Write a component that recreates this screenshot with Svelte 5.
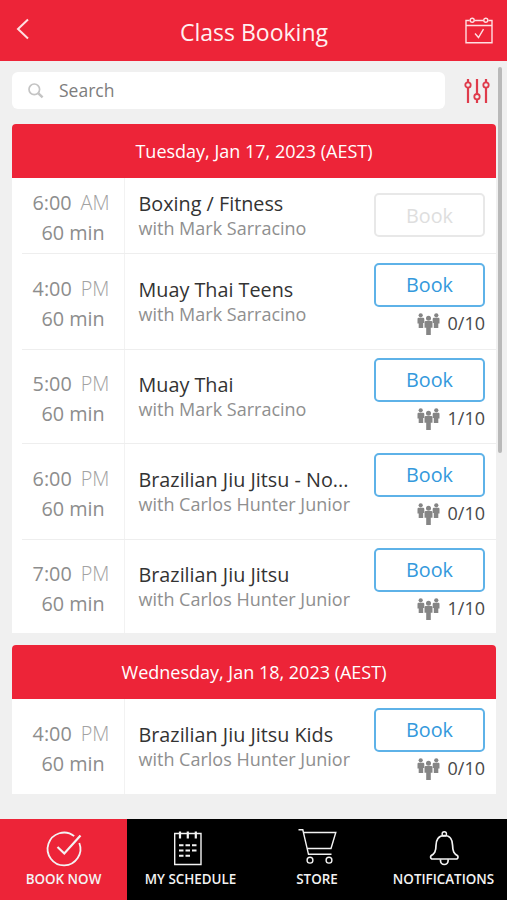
<script lang="ts">
  interface ClassItem {
    time: string;
    period: string;
    title: string;
    coach: string;
    spots: string | null;
    height: number;
  }

  interface Day {
    label: string;
    classes: ClassItem[];
  }

  const days: Day[] = [
    {
      label: 'Tuesday, Jan 17, 2023 (AEST)',
      classes: [
        { time: '6:00', period: 'AM', title: 'Boxing / Fitness', coach: 'Mark Sarracino', spots: null, height: 75 },
        { time: '4:00', period: 'PM', title: 'Muay Thai Teens', coach: 'Mark Sarracino', spots: '0/10', height: 96 },
        { time: '5:00', period: 'PM', title: 'Muay Thai', coach: 'Mark Sarracino', spots: '1/10', height: 94 },
        { time: '6:00', period: 'PM', title: 'Brazilian Jiu Jitsu - No...', coach: 'Carlos Hunter Junior', spots: '0/10', height: 96 },
        { time: '7:00', period: 'PM', title: 'Brazilian Jiu Jitsu', coach: 'Carlos Hunter Junior', spots: '1/10', height: 94 }
      ]
    },
    {
      label: 'Wednesday, Jan 18, 2023 (AEST)',
      classes: [
        { time: '4:00', period: 'PM', title: 'Brazilian Jiu Jitsu Kids', coach: 'Carlos Hunter Junior', spots: '0/10', height: 95 }
      ]
    }
  ];

  const tabs = [
    { id: 'book', label: 'BOOK NOW' },
    { id: 'schedule', label: 'MY SCHEDULE' },
    { id: 'store', label: 'STORE' },
    { id: 'alerts', label: 'NOTIFICATIONS' }
  ];

  let active = $state('book');
</script>

<div class="app">
  <header>
    <button class="back" aria-label="Back">
      <svg width="14" height="22" viewBox="0 0 14 22"><path d="M12 1.5 2 11l10 9.5" /></svg>
    </button>
    <h1>Class Booking</h1>
    <button class="calendar" aria-label="Calendar">
      <svg width="28" height="28" viewBox="0 0 28 28">
        <path d="M4.6 3.5H1v22.3h26V3.5h-3.6M9.6 3.5h9M1 8.500h26M10 16.500l3.500 4 5-8.300" />
        <circle cx="7.200" cy="3.200" r="2" /><circle cx="20.800" cy="3.200" r="2" />
      </svg>
    </button>
  </header>

  <main>
    <div class="search-row">
      <div class="search">
        <svg width="16" height="16" viewBox="0 0 16 16"><circle cx="6.300" cy="6.300" r="5.300" /><path class="handle" d="m10.400 10.400 4.200 4" /></svg>
        <span>Search</span>
      </div>
      <svg class="filter" width="26" height="26" viewBox="0 0 26 26">
        <path d="M4 1v3M4 9.800V25M13 1v14.700M13 21.500V25M22 1v3M22 9.800V25" />
        <circle cx="4" cy="7" r="2.700" /><circle cx="13" cy="18.700" r="2.700" /><circle cx="22" cy="7" r="2.700" />
      </svg>
    </div>

    {#each days as day}
      <section class="day">
        <h2>{day.label}</h2>
        {#each day.classes as item}
          <div class="row" style:height="{item.height}px">
            <div class="when">
              <div class="time">{item.time}<span>{item.period}</span></div>
              <div>60 min</div>
            </div>
            <div class="info">
              <div class="title">{item.title}</div>
              <div class="coach">with {item.coach}</div>
            </div>
            <div class="action">
              <button class="book" disabled={item.spots === null}>Book</button>
              {#if item.spots}
                <div class="spots">
                  <svg width="23" height="22" viewBox="0 0 23 22">
                    <circle cx="3.700" cy="2.300" r="2.100" /><circle cx="19.300" cy="2.300" r="2.100" />
                    <path d="M1.500 4.800h4.600q1.200 0 1.200 1.200V10H6.200v5H1.700v-4.500H.500V6Q.500 4.800 1.500 4.800ZM16.900 4.800h4.600q1 0 1 1.200v4.500h-1.200V15h-4.500v-5h-1.100V6Q15.700 4.800 16.900 4.800Z" />
                    <circle cx="11.500" cy="5.200" r="2.500" />
                    <path d="M8.800 8h5.400q1.300 0 1.300 1.300v5.500h-1.700V22H9.200v-7.200H7.500V9.300Q7.500 8 8.800 8Z" />
                  </svg>
                  <span>{item.spots}</span>
                </div>
              {/if}
            </div>
          </div>
        {/each}
      </section>
    {/each}
    <div class="scrollbar"></div>
  </main>

  <nav>
    {#each tabs as tab}
      <button class:active={active === tab.id} onclick={() => (active = tab.id)}>
        <svg width="40" height="38" viewBox="0 0 40 38">
          {#if tab.id === 'book'}
            <path stroke-width="1.8" d="M30.200 7.100A16.400 16.400 0 1 0 35.300 14" />
            <path stroke-width="2.200" d="m13.500 18 6.800 6.500L36.500 6.500" />
          {:else if tab.id === 'schedule'}
            <path d="M3.700 4.500H30v31H3.700Z" />
            <path stroke-width="2.200" d="M9 2.500v7M16.800 2.500v7M24.800 2.500v7" />
            <path stroke-width="2" d="M8 16.200h4.500M14.500 16.200H19M21 16.200h4.500M8 21.500h4.500M14.500 21.500H19M21 21.500h4.500M8 26.700h4.500M14.500 26.700H19" />
          {:else if tab.id === 'store'}
            <path d="M1.500.8h4.300l5.700 24.500h23M6.500 3.500h32.300l-4.800 16H10" />
            <circle cx="13" cy="31.200" r="2.900" /><circle cx="32" cy="31.200" r="2.900" />
          {:else}
            <path stroke-width="1.700" d="M20.300 6.500c-6 0-8.300 4.500-8.300 10 0 6-1.500 8-5 10.300-1.200 2 .2 3.200 2 3.200h22.600c1.800 0 3.200-1.200 2-3.200-3.500-2.300-5-4.300-5-10.300 0-5.500-2.300-10-8.300-10Z" />
            <circle cx="20.300" cy="4.900" r="2.200" />
            <path stroke-width="1.700" d="M16.500 30.300v1.400a3.800 3.800 0 0 0 7.600 0v-1.400" />
          {/if}
        </svg>
        <span>{tab.label}</span>
      </button>
    {/each}
  </nav>
</div>

<style>
  :global(body) { background: #f0f0f0; }
  .app {
    width: 507px; height: 900px; overflow: hidden;
    display: flex; flex-direction: column;
    background: #f0f0f0; font-family: 'Open Sans', 'Noto Sans', sans-serif;
  }
  button { font: inherit; color: inherit; border: 0; padding: 0; background: none; }
  svg { display: block; fill: none; stroke: currentColor; stroke-width: 1.4; flex-shrink: 0; }
  h1, h2 { margin: 0; font-weight: 400; color: #fff; }

  header {
    height: 61px; flex-shrink: 0; box-sizing: border-box; padding: 0 14px 0 16px;
    display: grid; grid-template-columns: 60px 1fr 60px; align-items: center;
    background: #ed2438; color: #ffdfe2;
  }
  header h1 { text-align: center; font-size: 23px; line-height: 32px; padding: 2px 1px 0 0; color: #fff0f1; }
  .back { justify-self: start; padding-bottom: 4px; }
  .back svg { stroke-width: 2; }
  .calendar { justify-self: end; }

  main { flex: 1; position: relative; padding: 11px 11px 0 12px; }
  .search-row { display: flex; align-items: center; height: 37px; padding-right: 6px; justify-content: space-between; }
  .search {
    width: 433px; height: 37px; box-sizing: border-box; padding-left: 16px;
    display: flex; align-items: center; gap: 15px;
    background: #fff; border-radius: 6px; color: #7d7d7d; font-size: 17.5px;
  }
  .search span { padding-bottom: 1px; }
  .search svg { margin-top: 1px; color: #c4c4c4; stroke-width: 1.7; }
  .search .handle { stroke-width: 2.5; }
  .filter { color: #df3b4b; stroke-width: 2.2; }
  .filter circle { stroke-width: 1.8; }

  .day { margin-top: 15px; background: #fff; border-radius: 4px 4px 0 0; overflow: hidden; }
  .day + .day { margin-top: 12px; }
  h2 {
    height: 54px; line-height: 54px; text-align: center;
    background: #ed2438; font-size: 18px;
  }
  .row { display: flex; box-sizing: border-box; margin-left: 10px; padding-left: 2px; }
  .row + .row { border-top: 1px solid #eee; }
  .when {
    width: 101px; flex-shrink: 0; padding: 4px 2px 0 0; box-sizing: border-box;
    display: flex; flex-direction: column; justify-content: center;
    border-right: 1px solid #f2f2f2; color: #8d8d8d; font-size: 19.8px; line-height: 30px; text-align: center;
  }
  .time { padding-right: 4px; }
  .time span { margin-left: 9px; color: #a2a2a2; font-weight: 300; }
  .info { flex: 1; padding: 1px 0 0 13.5px; display: flex; flex-direction: column; justify-content: center; white-space: nowrap; }
  .title { color: #333; font-size: 19.8px; line-height: 25px; }
  .coach { color: #8f8f8f; font-size: 18px; line-height: 25px; }
  .action { width: 111px; flex-shrink: 0; padding: 0 11px 1px 0; display: flex; flex-direction: column; justify-content: center; }
  .book {
    height: 44px; border: 2px solid #5eb2e8; border-radius: 5px;
    color: #3499dc; font-size: 19.8px;
  }
  .book:disabled { border-color: #e8e8e8; color: #dedede; }
  .spots { height: 24px; margin: 5px 0 4px; display: flex; align-items: center; justify-content: flex-end; gap: 8px; color: #484848; font-size: 18px; line-height: 24px; }
  .spots span { padding-bottom: 2px; }
  .spots svg { fill: #858585; stroke: none; }
  .scrollbar { position: absolute; top: 6px; right: 5px; width: 4px; height: 386px; border-radius: 2px; background: #b9b9b9; }

  nav { height: 81px; flex-shrink: 0; display: grid; grid-template-columns: 127px 127px 126px 127px; background: #000; }
  nav button {
    display: flex; flex-direction: column; align-items: center; padding-top: 10px; box-sizing: border-box;
    color: #f3f3f3; font-size: 13.4px; font-weight: 600; line-height: 18px; white-space: nowrap;
  }
  nav span { margin-top: 3px; }
  nav .active { background: #ed2438; }
</style>
